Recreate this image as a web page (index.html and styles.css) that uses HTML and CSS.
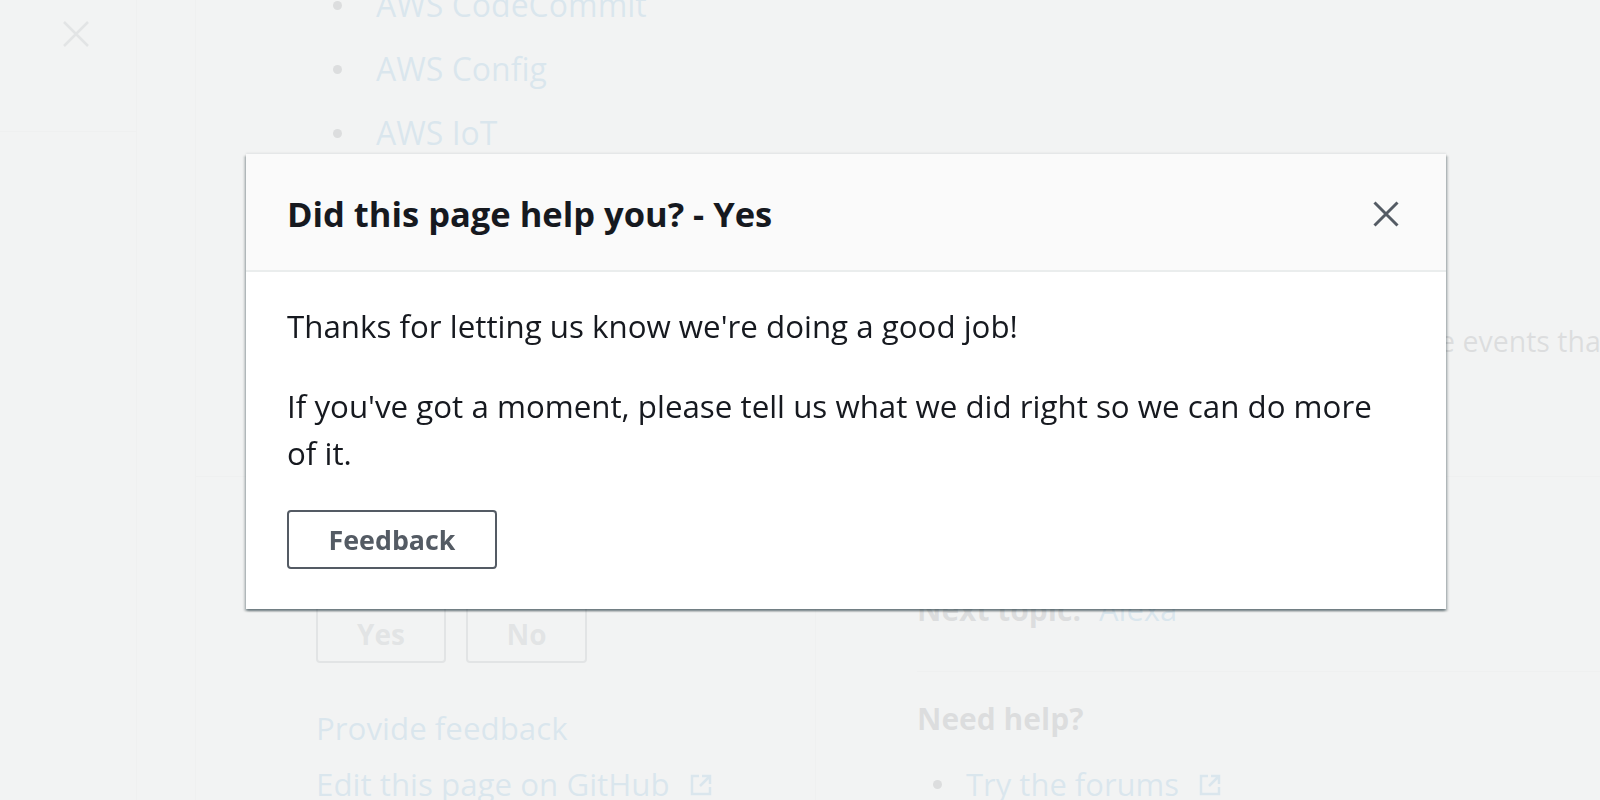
FILE: index.html
```html
<!DOCTYPE html>
<html lang="en">
<head>
<meta charset="utf-8">
<title>Did this page help you? - Yes</title>
<link rel="stylesheet" href="styles.css">
</head>
<body>
<div class="page">
  <aside class="sidenav">
    <div class="sidenav-head">
      <svg class="nav-close" width="26" height="26" viewBox="0 0 26 26" aria-hidden="true"><path d="M1 1L25 25M25 1L1 25"/></svg>
    </div>
  </aside>
  <div class="rail"></div>
  <main class="main">
    <div class="article">
      <ul class="services">
        <li><a class="link">AWS CodeCommit</a></li>
        <li><a class="link">AWS Config</a></li>
        <li><a class="link">AWS IoT</a></li>
      </ul>
      <p class="intro">e events that occur in your account</p>
    </div>
    <div class="feedback-row">
      <div class="fb-left">
        <h3 class="fb-heading">Did this page help you?</h3>
        <div class="fb-buttons">
          <button class="btn-ghost btn-yes">Yes</button>
          <button class="btn-ghost btn-no">No</button>
        </div>
        <a class="link fb-link">Provide feedback</a>
        <a class="link fb-link fb-link-ext">Edit this page on GitHub
          <svg class="ext-icon" width="22" height="22" viewBox="0 0 22 22" aria-hidden="true"><path d="M9 2H2v18h18v-7"/><path d="M12 2h8v8M20 2L10 12"/></svg>
        </a>
      </div>
      <div class="fb-right">
        <div class="topic-nav">
          <p class="topic-line"><strong>Previous topic:</strong><a class="link topic-link">AWS IoT</a></p>
          <p class="topic-line"><strong>Next topic:</strong><a class="link topic-link">Alexa</a></p>
        </div>
        <h3 class="help-heading">Need help?</h3>
        <ul class="help-list">
          <li><a class="link">Try the forums
            <svg class="ext-icon" width="22" height="22" viewBox="0 0 22 22" aria-hidden="true"><path d="M9 2H2v18h18v-7"/><path d="M12 2h8v8M20 2L10 12"/></svg>
          </a></li>
        </ul>
      </div>
    </div>
  </main>
</div>

<div class="overlay"></div>

<div class="modal" role="dialog" aria-modal="true">
  <div class="modal-header">
    <h2 class="modal-title">Did this page help you? - Yes</h2>
    <button class="modal-close" aria-label="Close">
      <svg width="26" height="26" viewBox="0 0 26 26" aria-hidden="true"><path d="M1.5 1.5L24.5 24.5M24.5 1.5L1.5 24.5"/></svg>
    </button>
  </div>
  <div class="modal-body">
    <p class="modal-text">Thanks for letting us know we're doing a good job!</p>
    <p class="modal-text">If you've got a moment, please tell us what we did right so we can do more of it.</p>
    <button class="btn-feedback">Feedback</button>
  </div>
</div>
</body>
</html>
```

FILE: styles.css
```css
* {
  box-sizing: border-box;
}

html, body {
  margin: 0;
  padding: 0;
  height: 800px;
  overflow: hidden;
  background: #f2f3f3;
  font-family: "Open Sans", "Noto Sans", sans-serif;
  color: #16191f;
}

.page {
  display: flex;
  height: 800px;
}

/* left navigation */
.sidenav {
  width: 137px;
  flex: none;
  border-right: 1px solid #cfd6d6;
}

.sidenav-head {
  height: 132px;
  border-bottom: 1px solid #cfd6d6;
  padding: 21px 0 0 63px;
}

.nav-close {
  display: block;
  fill: none;
  stroke: #545b64;
  stroke-width: 2.5;
}

.rail {
  width: 59px;
  flex: none;
  border-right: 1px solid #cfd6d6;
}

.main {
  flex: 1;
  min-width: 0;
  overflow: hidden;
  display: flex;
  flex-direction: column;
}

.link {
  color: #0073bb;
  text-decoration: none;
}

/* article */
.article {
  padding: 0 0 111px 120px;
}

.services {
  list-style: none;
  margin: -27px 0 0;
  padding: 0 0 0 60px;
  font-size: 32px;
  line-height: 64px;
}

.services li {
  display: flex;
  align-items: center;
}

.services li::before {
  content: "";
  width: 9px;
  height: 9px;
  border-radius: 50%;
  background: #16191f;
  margin: 0 34px 0 -43px;
  flex: none;
}

.intro {
  margin: 153px 0 0;
  font-size: 28.5px;
  line-height: 47px;
  white-space: nowrap;
  text-indent: 1123px;
}

/* feedback area */
.feedback-row {
  display: flex;
  border-top: 1px solid #cfd6d6;
  flex: 1;
}

.fb-left {
  width: 619px;
  flex: none;
  padding: 48px 0 0 120px;
  display: flex;
  flex-direction: column;
  align-items: flex-start;
}

.fb-heading {
  margin: 0 0 33px;
  font-size: 31px;
  line-height: 47px;
  font-weight: 700;
}

.fb-buttons {
  display: flex;
  gap: 20px;
}

.btn-ghost {
  height: 58px;
  border: 2px solid #545b64;
  border-radius: 4px;
  background: transparent;
  color: #545b64;
  font-family: inherit;
  font-size: 28px;
  font-weight: 700;
  padding: 0;
}

.btn-yes { width: 130px; }
.btn-no { width: 121px; }

.fb-link {
  font-size: 31.3px;
  line-height: 47px;
  margin-top: 42px;
  display: flex;
  align-items: center;
}

.fb-link-ext {
  margin-top: 9px;
}

.ext-icon {
  fill: none;
  stroke: #0073bb;
  stroke-width: 2.5;
  margin-left: 20px;
  flex: none;
}

.fb-right {
  flex: 1;
  border-left: 1px solid #cfd6d6;
  padding: 52px 0 0 101px;
}

.topic-nav {
  border-bottom: 1px solid #cfd6d6;
  padding-bottom: 28px;
}

.topic-line {
  margin: 0 0 10px;
  font-size: 31px;
  line-height: 47px;
}

.topic-line strong {
  font-size: 30px;
}

.topic-link {
  margin-left: 18px;
}

.help-heading {
  margin: 23px 0 19px;
  font-size: 30px;
  line-height: 47px;
  font-weight: 700;
}

.help-list {
  list-style: none;
  margin: 0;
  padding: 0 0 0 49px;
  font-size: 31px;
  line-height: 47px;
}

.help-list li {
  display: flex;
  align-items: center;
}

.help-list li::before {
  content: "";
  width: 9px;
  height: 9px;
  border-radius: 50%;
  background: #16191f;
  margin: 0 24px 0 -33px;
  flex: none;
}

.help-list .link {
  display: flex;
  align-items: center;
}

/* overlay + modal */
.overlay {
  position: fixed;
  inset: 0;
  background: rgba(242, 243, 243, 0.9);
  z-index: 1;
}

.modal {
  position: absolute;
  top: 154px;
  left: 246px;
  width: 1200px;
  background: #ffffff;
  z-index: 2;
  box-shadow:
    0 2px 2px 0 rgba(0, 28, 36, 0.35),
    2px 2px 2px 0 rgba(0, 28, 36, 0.18),
    -2px 2px 2px 0 rgba(0, 28, 36, 0.18),
    0 -1px 2px 0 rgba(0, 28, 36, 0.08);
}

.modal-header {
  display: flex;
  align-items: center;
  justify-content: space-between;
  padding: 40px 47px 36px 41px;
  background: #fafafa;
  border-bottom: 2px solid #eaeded;
}

.modal-title {
  margin: 0;
  font-size: 34.5px;
  line-height: 40px;
  font-weight: 700;
  color: #16191f;
}

.modal-close {
  border: 0;
  background: transparent;
  padding: 0;
  width: 26px;
  height: 26px;
  display: flex;
}

.modal-close svg {
  fill: none;
  stroke: #545b64;
  stroke-width: 3;
}

.modal-body {
  padding: 31px 40px 40px 41px;
}

.modal-text {
  margin: 0 0 33px;
  max-width: 1100px;
  font-size: 31.3px;
  line-height: 47px;
  color: #16191f;
}

.btn-feedback {
  display: block;
  width: 210px;
  height: 59px;
  border: 2px solid #545b64;
  border-radius: 4px;
  background: #ffffff;
  color: #545b64;
  font-family: inherit;
  font-size: 26.8px;
  font-weight: 700;
  padding: 0;
}
```
